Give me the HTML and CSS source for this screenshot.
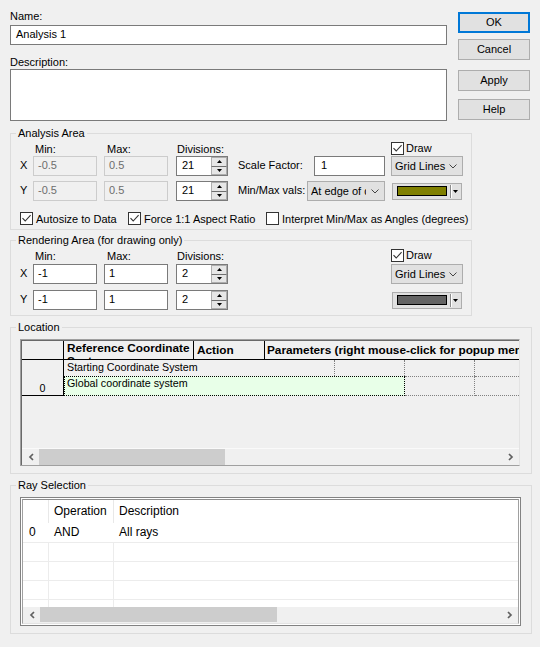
FILE: index.html
```html
<!DOCTYPE html>
<html>
<head>
<meta charset="utf-8">
<link rel="stylesheet" href="styles.css">
</head>
<body>
<div class="dialog">
  <div class="top">
    <div class="fields">
      <div class="lbl">Name:</div>
      <div class="edit name-edit">Analysis 1</div>
      <div class="lbl desc-lbl">Description:</div>
      <div class="edit desc-edit"></div>
    </div>
    <div class="buttons">
      <div class="btn default">OK</div>
      <div class="btn b-cancel">Cancel</div>
      <div class="btn b-apply">Apply</div>
      <div class="btn b-help">Help</div>
    </div>
  </div>

  <fieldset class="group g-analysis">
    <legend>Analysis Area</legend>
    <div class="hrow a-hdr">
      <span class="axis"></span>
      <span class="h-min">Min:</span>
      <span class="h-max">Max:</span>
      <span class="h-div">Divisions:</span>
      <span class="hspacer"></span>
      <span class="cbi draw"><svg class="cb" width="13" height="13" viewBox="0 0 13 13"><rect x="0.5" y="0.5" width="12" height="12" fill="#fff" stroke="#333"/><path d="M2.5 6.2 L5.2 9 L10.6 3.2" fill="none" stroke="#333" stroke-width="1.1"/></svg><span>Draw</span></span>
    </div>
    <div class="frow">
      <span class="axis">X</span>
      <div class="edit dis w64">-0.5</div>
      <div class="edit dis w64 ml7">0.5</div>
      <div class="spin ml8"><div class="spin-edit">21</div><div class="spin-btns"><span class="sb up"><svg width="5" height="3" viewBox="0 0 5 3"><polygon points="0,3 2.5,0 5,3" fill="#000"/></svg></span><span class="sb dn"><svg width="5" height="3" viewBox="0 0 5 3"><polygon points="0,0 5,0 2.5,3" fill="#000"/></svg></span></div></div>
      <span class="rlabel ml10 w76">Scale Factor:</span>
      <div class="edit w71 scale">1</div>
      <div class="combo w72 ml6"><span class="ctext">Grid Lines</span><svg class="chev" width="8" height="5" viewBox="0 0 8 5"><polyline points="0.5,0.5 4,4 7.5,0.5" fill="none" stroke="#444" stroke-width="1"/></svg></div>
    </div>
    <div class="frow mt5">
      <span class="axis">Y</span>
      <div class="edit dis w64">-0.5</div>
      <div class="edit dis w64 ml7">0.5</div>
      <div class="spin ml8"><div class="spin-edit">21</div><div class="spin-btns"><span class="sb up"><svg width="5" height="3" viewBox="0 0 5 3"><polygon points="0,3 2.5,0 5,3" fill="#000"/></svg></span><span class="sb dn"><svg width="5" height="3" viewBox="0 0 5 3"><polygon points="0,0 5,0 2.5,3" fill="#000"/></svg></span></div></div>
      <span class="rlabel ml10 w69">Min/Max vals:</span>
      <div class="combo w78"><span class="ctext clip">At edge of data</span><svg class="chev" width="8" height="5" viewBox="0 0 8 5"><polyline points="0.5,0.5 4,4 7.5,0.5" fill="none" stroke="#444" stroke-width="1"/></svg></div>
      <div class="ccombo ml7"><span class="swatch olive"></span><span class="csep"></span><svg width="5" height="3" viewBox="0 0 5 3"><polygon points="0,0 5,0 2.5,3" fill="#000"/></svg></div>
    </div>
    <div class="cbrow">
      <span class="cbi w108"><svg class="cb" width="13" height="13" viewBox="0 0 13 13"><rect x="0.5" y="0.5" width="12" height="12" fill="#fff" stroke="#333"/><path d="M2.5 6.2 L5.2 9 L10.6 3.2" fill="none" stroke="#333" stroke-width="1.1"/></svg><span>Autosize to Data</span></span>
      <span class="cbi w138"><svg class="cb" width="13" height="13" viewBox="0 0 13 13"><rect x="0.5" y="0.5" width="12" height="12" fill="#fff" stroke="#333"/><path d="M2.5 6.2 L5.2 9 L10.6 3.2" fill="none" stroke="#333" stroke-width="1.1"/></svg><span>Force 1:1 Aspect Ratio</span></span>
      <span class="cbi"><svg class="cb" width="13" height="13" viewBox="0 0 13 13"><rect x="0.5" y="0.5" width="12" height="12" fill="#fff" stroke="#333"/></svg><span>Interpret Min/Max as Angles (degrees)</span></span>
    </div>
  </fieldset>

  <fieldset class="group g-render">
    <legend>Rendering Area (for drawing only)</legend>
    <div class="hrow r-hdr">
      <span class="axis"></span>
      <span class="h-min">Min:</span>
      <span class="h-max">Max:</span>
      <span class="h-div">Divisions:</span>
      <span class="hspacer"></span>
      <span class="cbi draw"><svg class="cb" width="13" height="13" viewBox="0 0 13 13"><rect x="0.5" y="0.5" width="12" height="12" fill="#fff" stroke="#333"/><path d="M2.5 6.2 L5.2 9 L10.6 3.2" fill="none" stroke="#333" stroke-width="1.1"/></svg><span>Draw</span></span>
    </div>
    <div class="frow">
      <span class="axis">X</span>
      <div class="edit w64">-1</div>
      <div class="edit w64 ml7">1</div>
      <div class="spin ml8"><div class="spin-edit">2</div><div class="spin-btns"><span class="sb up"><svg width="5" height="3" viewBox="0 0 5 3"><polygon points="0,3 2.5,0 5,3" fill="#000"/></svg></span><span class="sb dn"><svg width="5" height="3" viewBox="0 0 5 3"><polygon points="0,0 5,0 2.5,3" fill="#000"/></svg></span></div></div>
      <span class="gap163"></span>
      <div class="combo w72"><span class="ctext">Grid Lines</span><svg class="chev" width="8" height="5" viewBox="0 0 8 5"><polyline points="0.5,0.5 4,4 7.5,0.5" fill="none" stroke="#444" stroke-width="1"/></svg></div>
    </div>
    <div class="frow mt6">
      <span class="axis">Y</span>
      <div class="edit w64">-1</div>
      <div class="edit w64 ml7">1</div>
      <div class="spin ml8"><div class="spin-edit">2</div><div class="spin-btns"><span class="sb up"><svg width="5" height="3" viewBox="0 0 5 3"><polygon points="0,3 2.5,0 5,3" fill="#000"/></svg></span><span class="sb dn"><svg width="5" height="3" viewBox="0 0 5 3"><polygon points="0,0 5,0 2.5,3" fill="#000"/></svg></span></div></div>
      <span class="gap164"></span>
      <div class="ccombo"><span class="swatch grey"></span><span class="csep"></span><svg width="5" height="3" viewBox="0 0 5 3"><polygon points="0,0 5,0 2.5,3" fill="#000"/></svg></div>
    </div>
  </fieldset>

  <fieldset class="group g-location">
    <legend>Location</legend>
    <div class="lgrid">
      <div class="lgrid-in">
        <div class="lhead">
          <div class="rh"></div>
          <div class="hc c1">Reference Coordinate System</div>
          <div class="hc c2">Action</div>
          <div class="hc c3">Parameters (right mouse-click for popup menu)</div>
        </div>
        <div class="lbody">
          <div class="rnum">0</div>
          <div class="lrows">
            <div class="lrow r1">
              <div class="dc s1">Starting Coordinate System</div>
              <div class="dc s2"></div>
              <div class="dc s3"></div>
              <div class="dc s4"></div>
            </div>
            <div class="lrow r2">
              <div class="dc g1">Global coordinate system</div>
              <div class="dc t3"></div>
              <div class="dc t4"></div>
            </div>
          </div>
        </div>
        <div class="lfill"></div>
        <div class="hscroll lscroll">
          <div class="sbb"><svg width="6" height="8" viewBox="0 0 6 8"><polyline points="5,1 2,4 5,7" fill="none" stroke="#606060" stroke-width="1.7"/></svg></div>
          <div class="thumb lthumb"></div>
          <div class="track"></div>
          <div class="sbb"><svg width="6" height="8" viewBox="0 0 6 8"><polyline points="1,1 4,4 1,7" fill="none" stroke="#606060" stroke-width="1.7"/></svg></div>
        </div>
      </div>
    </div>
  </fieldset>

  <fieldset class="group g-ray">
    <legend>Ray Selection</legend>
    <div class="rgrid">
      <div class="rgrid-in">
        <div class="rrows">
          <div class="rrow rhead"><div class="rc k0"></div><div class="rc k1">Operation</div><div class="rc k2">Description</div></div>
          <div class="rrow r0"><div class="rc k0">0</div><div class="rc k1">AND</div><div class="rc k2">All rays</div></div>
          <div class="rrow re"><div class="rc k0"></div><div class="rc k1"></div><div class="rc k2"></div></div>
          <div class="rrow re"><div class="rc k0"></div><div class="rc k1"></div><div class="rc k2"></div></div>
          <div class="rrow re"><div class="rc k0"></div><div class="rc k1"></div><div class="rc k2"></div></div>
          <div class="rrow re"><div class="rc k0"></div><div class="rc k1"></div><div class="rc k2"></div></div>
        </div>
        <div class="hscroll rscroll">
          <div class="sbb"><svg width="6" height="8" viewBox="0 0 6 8"><polyline points="5,1 2,4 5,7" fill="none" stroke="#606060" stroke-width="1.7"/></svg></div>
          <div class="thumb rthumb"></div>
          <div class="track"></div>
          <div class="sbb"><svg width="6" height="8" viewBox="0 0 6 8"><polyline points="1,1 4,4 1,7" fill="none" stroke="#606060" stroke-width="1.7"/></svg></div>
        </div>
      </div>
    </div>
  </fieldset>
</div>
</body>
</html>
```

FILE: styles.css
```css
* { box-sizing: border-box; }
html, body { margin: 0; padding: 0; }
body {
  width: 540px;
  height: 647px;
  overflow: hidden;
  background: #f0f0f0;
  font-family: "Liberation Sans", Arial, sans-serif;
  font-size: 11px;
  line-height: 14px;
  color: #000;
}
.dialog { padding: 0 9px 0 10px; }

/* top area */
.top { display: flex; justify-content: space-between; align-items: flex-start; }
.fields { width: 437px; padding-top: 9px; }
.lbl { height: 14px; white-space: nowrap; }
.desc-lbl { margin-top: 11px; height: 13px; line-height: 13px; }
.edit {
  background: #fff;
  border: 1px solid #7a7a7a;
  height: 20px;
  line-height: 16px;
  padding: 0 4px;
  white-space: nowrap;
  overflow: hidden;
  flex: none;
}
.name-edit { margin-top: 2px; padding-left: 5px; }
.desc-edit { height: 52px; }
.edit.dis { background: #f0f0f0; border-color: #cccccc; color: #6d6d6d; }
.scale { padding-left: 6px; }

.buttons { width: 72px; margin-right: 1px; padding-top: 12px; display: flex; flex-direction: column; }
.btn {
  height: 21px;
  border: 1px solid #adadad;
  background: #e1e1e1;
  text-align: center;
  line-height: 19px;
}
.btn.default { border: 2px solid #0078d7; line-height: 17px; }
.b-cancel { margin-top: 6px; }
.b-apply { margin-top: 10px; }
.b-help { margin-top: 8px; }

/* group boxes */
.group {
  margin: 0;
  padding: 0;
  border: 1px solid #dcdcdc;
  min-width: 0;
}
.group > legend {
  margin-left: 5px;
  padding: 0 2px;
  height: 14px;
  line-height: 14px;
  white-space: nowrap;
}
.g-analysis { width: 462px; margin-top: 5px; padding-bottom: 3px; }
.g-render { width: 462px; margin-top: 3px; padding-bottom: 5px; }
.g-location { width: 522px; margin-top: 4px; padding-bottom: 7px; }
.g-ray { width: 522px; margin-top: 4px; padding-bottom: 7px; }

/* rows of controls */
.hrow { display: flex; align-items: flex-end; }
.a-hdr { height: 16px; }
.r-hdr { height: 17px; }
.r-hdr > .h-min, .r-hdr > .h-max, .r-hdr > .h-div { margin-bottom: 1px; }
.frow { display: flex; align-items: center; height: 20px; }
.mt5 { margin-top: 5px; }
.mt6 { margin-top: 6px; }
.axis { width: 22px; padding-left: 9px; flex: none; }
.frow > .axis { padding-bottom: 2px; }
.h-min { width: 64px; padding-left: 2px; flex: none; }
.h-max { width: 64px; margin-left: 7px; padding-left: 3px; flex: none; }
.h-div { width: 52px; margin-left: 8px; padding-left: 1px; flex: none; }
.hspacer { width: 163px; flex: none; }
.gap163 { width: 163px; flex: none; }
.gap164 { width: 164px; flex: none; }
.w64 { width: 64px; }
.w69 { width: 69px; }
.w71 { width: 71px; }
.w72 { width: 72px; }
.w76 { width: 76px; }
.w78 { width: 78px; }
.w108 { width: 108px; }
.w138 { width: 138px; }
.ml6 { margin-left: 6px; }
.ml7 { margin-left: 7px; }
.ml8 { margin-left: 8px; }
.ml10 { margin-left: 10px; }
.rlabel { flex: none; white-space: nowrap; padding-bottom: 2px; }

/* checkbox */
.cbi { display: flex; align-items: center; gap: 3px; white-space: nowrap; flex: none; }
.cb { display: block; flex: none; }
.draw { align-self: flex-start; margin-top: 1px; gap: 2px; }
.cbrow { display: flex; align-items: center; height: 15px; margin-top: 10px; padding-left: 9px; }

/* spinner */
.spin { display: flex; width: 52px; height: 20px; flex: none; }
.spin-edit {
  flex: 1;
  background: #fff;
  border: 1px solid #7a7a7a;
  border-right: none;
  line-height: 16px;
  padding-left: 5px;
}
.spin-btns {
  width: 17px;
  display: flex;
  flex-direction: column;
  border: 1px solid #7a7a7a;
  border-left: none;
  background: #fff;
}
.sb {
  flex: 1;
  display: flex;
  align-items: center;
  justify-content: center;
  background: #e6e6e6;
  border: 1px solid #adadad;
}
.sb.up { border-bottom-color: #707070; }
.sb.dn { border-top: none; }

/* combo boxes */
.combo {
  height: 20px;
  border: 1px solid #adadad;
  background: #e1e1e1;
  display: flex;
  align-items: center;
  padding-left: 3px;
  flex: none;
}
.ctext { white-space: nowrap; padding-bottom: 1px; }
.ctext.clip { width: 55px; overflow: hidden; }
.chev { margin-left: auto; margin-right: 5px; display: block; }
.ccombo {
  width: 70px;
  height: 17px;
  border: 1px solid #adadad;
  background: #e1e1e1;
  display: flex;
  align-items: center;
  padding-left: 4px;
  flex: none;
}
.swatch { width: 50px; height: 10px; border: 1px solid #000; flex: none; }
.swatch.olive { background: #808000; }
.swatch.grey { background: #646464; }
.csep { width: 2px; height: 13px; margin-left: 3px; margin-right: 1px; border-left: 1px solid #8c8c8c; border-right: 1px solid #fff; }
.ccombo svg { display: block; }

/* location grid */
.lgrid {
  margin: 5px 0 0 9px;
  width: 500px;
  height: 127px;
  border: 1px solid;
  border-color: #a0a0a0 #e3e3e3 #a0a0a0 #a0a0a0;
}
.lgrid-in {
  height: 100%;
  border-top: 1px solid #696969;
  border-left: 1px solid #696969;
  display: flex;
  flex-direction: column;
  overflow: hidden;
  font-size: 10.7px;
}
.lhead { display: flex; height: 19px; border-bottom: 1px solid #000; flex: none; }
.rh { width: 42px; border-right: 1px solid #000; flex: none; }
.hc {
  font-weight: bold;
  font-size: 11.8px;
  overflow: hidden;
  border-right: 1px solid #000;
  flex: none;
  height: 18px;
}
.c1 { width: 130px; padding: 1px 0 0 3px; line-height: 13px; }
.c2 { width: 71px; padding-left: 3px; line-height: 18px; white-space: nowrap; }
.c3 { flex: 1; border-right: none; padding-left: 2px; line-height: 18px; white-space: nowrap; }
.lbody { display: flex; height: 36px; flex: none; }
.rnum {
  width: 42px;
  flex: none;
  border-right: 1px solid #000;
  border-bottom: 1px solid #000;
  display: flex;
  align-items: flex-end;
  justify-content: center;
  line-height: 13px;
}
.lrows { flex: 1; display: flex; flex-direction: column; }
.lrow { display: flex; }
.r1 { height: 16px; }
.r2 { height: 20px; }
.dc { flex: none; white-space: nowrap; overflow: hidden; }
.s1 { width: 271px; border-right: 1px dotted #808080; padding-left: 3px; line-height: 15px; }
.s2 { width: 70px; border-right: 1px dotted #808080; }
.s3 { width: 70px; border-right: 1px dotted #808080; }
.s4 { flex: 1; }
.g1 {
  width: 341px;
  background: #e8ffe8;
  border: 1px dotted #000;
  padding-left: 2px;
  line-height: 13px;
}
.t3 { width: 70px; border-top: 1px dotted #808080; border-bottom: 1px dotted #808080; border-right: 1px dotted #808080; }
.t4 { flex: 1; border-top: 1px dotted #808080; border-bottom: 1px dotted #808080; }
.lfill { flex: 1; }

/* scrollbars */
.hscroll { display: flex; flex: none; background: #f0f0f0; }
.lscroll { height: 17px; border-top: 1px solid #fafafa; }
.rscroll { height: 16px; padding-bottom: 1px; }
.sbb { width: 17px; flex: none; display: flex; align-items: center; justify-content: center; }
.sbb svg { display: block; }
.thumb { background: #cdcdcd; flex: none; }
.lthumb { width: 186px; }
.rthumb { width: 237px; }
.track { flex: 1; }

/* ray grid */
.rgrid {
  margin: 5px 0 0 9px;
  width: 501px;
  height: 129px;
  border: 1px solid #828282;
  padding: 1px;
  background: #fff;
}
.rgrid-in {
  height: 100%;
  border: 1px solid;
  border-color: #8c8c8c #a0a0a0 #e3e3e3 #a0a0a0;
  display: flex;
  flex-direction: column;
  overflow: hidden;
  font-size: 12px;
  background: #fff;
}
.rrows { flex: 1; overflow: hidden; }
.rrow { display: flex; }
.rc { flex: none; white-space: nowrap; }
.k0 { width: 26px; padding-left: 6px; }
.k1 { width: 65px; padding-left: 5px; }
.k2 { flex: 1; padding-left: 5px; }
.rhead { height: 23px; line-height: 23px; }
.rhead .k0, .rhead .k1 { border-right: 1px solid #e8e8e8; }
.r0 { height: 20px; line-height: 19px; border-bottom: 1px solid #ececec; }
.re { height: 19px; border-bottom: 1px solid #ececec; }
.re .k0, .re .k1 { border-right: 1px solid #ececec; }
```
